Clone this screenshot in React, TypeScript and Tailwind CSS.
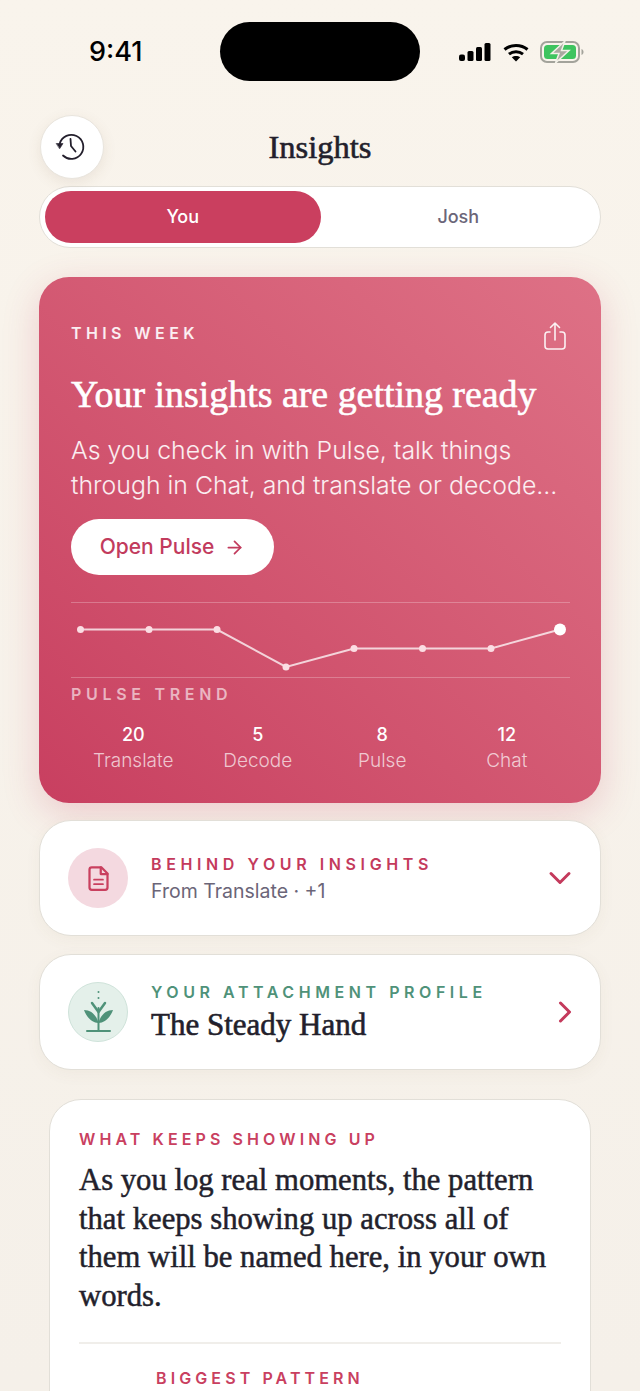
import React from 'react';
import { ArrowRight, ChevronDown, ChevronRight } from 'lucide-react';

const points = [
    [9.5, 27.5], [78, 27.5], [146, 27.5], [215, 65], [283, 46.5], [351.5, 46.5], [420, 46.5], [489, 27.5],
];

const stats = [
    { value: '20', label: 'Translate' },
    { value: '5', label: 'Decode' },
    { value: '8', label: 'Pulse' },
    { value: '12', label: 'Chat' },
];

const serif = "font-['Liberation_Serif',serif] [-webkit-text-stroke:0.6px_currentColor]";
const serifBody = "font-['Liberation_Serif',serif] [-webkit-text-stroke:0.5px_currentColor]";

const StatusIcons = () => (
    <div className="flex items-center">
        <svg width="32" height="18" viewBox="0 0 32 18" fill="#000">
            <rect x="0" y="11.500" width="6" height="6.500" rx="2" />
            <rect x="8.500" y="8" width="6" height="10" rx="1.500" />
            <rect x="17" y="4" width="6" height="14" rx="1.500" />
            <rect x="25.500" y="0" width="6" height="18" rx="1.500" />
        </svg>
        <svg width="26" height="19" viewBox="0 0 26 19" fill="none" stroke="#000" strokeWidth="3" className="ml-[12px]">
            <path d="M1.500 6.500C8 1 18 1 24.500 6.500" />
            <path d="M6 11.200C10 8 16 8 20 11.200" />
            <path d="M13 18.500L8.800 14.200C11 12.600 15 12.600 17.200 14.200Z" fill="#000" stroke="none" />
        </svg>
        <svg width="44" height="24" viewBox="0 0 44 24" className="ml-[11px]">
            <rect x="1" y="2" width="38" height="20" rx="6" fill="none" stroke="#a3a39b" strokeWidth="2" />
            <rect x="4" y="5" width="32" height="14" rx="3.500" fill="#3ec45f" />
            <path d="M41.500 9v6c1.400-.5 2-1.600 2-3s-.6-2.500-2-3z" fill="#a3a39b" />
            <path d="M25 1L11.500 13.500H19L15.500 23L29 10.500H21.500z" fill="#a9a9a0" stroke="#f3f1e8" strokeWidth="1.500" />
        </svg>
    </div>
);

const App = () => {
    return (
        <div className="w-[640px] h-[1391px] overflow-hidden bg-gradient-to-b from-[#f9f4ec] to-[#f5f0e9] font-['Inter',sans-serif] text-[#231f2c]">
            <div className="relative flex justify-center pt-[22px] h-[115px]">
                <div className="w-[200px] h-[59px] bg-black rounded-[30px]" />
                <div className="absolute left-[89px] top-[34px] text-[27px] leading-[36px] font-medium text-black">9:41</div>
                <div className="absolute right-[56px] top-[40px]"><StatusIcons /></div>
            </div>

            <div className="px-[39px]">
                <div className="flex items-center">
                    <button className="ml-px w-[64px] h-[64px] rounded-full bg-white shadow-[0_4px_14px_rgba(120,90,60,0.1)] border border-[#e9e5de]">
                        <svg width="62" height="62" viewBox="1 1 62 62" fill="none" stroke="#231f2c" strokeWidth="1.800" strokeLinecap="round" strokeLinejoin="round">
                            <path d="M19.800 28.500A12 12 0 1 1 23 40.500" />
                            <path d="M30.500 24L31 31L35.500 36.500" />
                            <path d="M16.500 28.500h6.500l-3.200 5z" fill="#231f2c" strokeWidth="0.600" />
                        </svg>
                    </button>
                    <h1 className={`flex-1 text-center text-[32.500px] -ml-px pt-px ${serif}`}>Insights</h1>
                    <div className="w-[64px]" />
                </div>

                <div className="mt-[7px] h-[62px] rounded-full bg-white border border-[#e2dfd8] p-[4px] pl-[5px] flex">
                    <div className="flex-1 rounded-full bg-[#ca3f5f] text-white text-[18px] font-medium flex items-center justify-center pb-px">You</div>
                    <div className="flex-1 rounded-full text-[#6b6578] text-[18px] font-medium flex items-center justify-center pb-px">Josh</div>
                </div>

                <section className="mt-[29px] h-[526px] rounded-[30px] px-[32px] pt-[46px] bg-gradient-to-tr from-[#c83f60] to-[#de7186] shadow-[0_10px_36px_rgba(200,64,96,0.22)] text-white">
                    <div className="flex justify-between items-start">
                        <div className="text-[16px] leading-[20px] font-semibold tracking-[4.4px] text-white/90">THIS WEEK</div>
                        <svg width="24" height="30" viewBox="0 0 24 30" fill="none" stroke="#fff" strokeOpacity="0.9" strokeWidth="1.600" strokeLinecap="round" strokeLinejoin="round" className="mr-[2px] -mt-[2px]">
                            <path d="M7 11H5a3 3 0 0 0-3 3v11a3 3 0 0 0 3 3h14a3 3 0 0 0 3-3V14a3 3 0 0 0-3-3h-2" />
                            <path d="M12 19V2M7.500 6.500L12 2l4.500 4.500" />
                        </svg>
                    </div>
                    <h2 className={`mt-[21px] text-[37.900px] leading-[44px] whitespace-nowrap ${serif}`}>Your insights are getting ready</h2>
                    <p className="mt-[17px] text-[24.850px] leading-[35px] font-light text-white/90 whitespace-nowrap">
                        As you check in with Pulse, talk things<br />through in Chat, and translate or decode...
                    </p>
                    <button className="mt-[16px] w-[203px] h-[56px] rounded-full bg-white text-[#c23b5d] text-[21px] font-medium flex items-center justify-center gap-[10px]">
                        Open Pulse <ArrowRight size={21} strokeWidth={2} />
                    </button>

                    <svg width="499" height="76" viewBox="0 0 499 76" className="mt-[27px] block" fill="none">
                        <path d="M0 .5H499M0 75.500H499" stroke="#fff" strokeOpacity="0.25" />
                        <polyline points={points.map((p) => p.join(',')).join(' ')} stroke="#fff" strokeOpacity="0.75" strokeWidth="2" />
                        {points.slice(0, 7).map((p) => (
                            <circle key={p[0]} cx={p[0]} cy={p[1]} r="3.500" fill="#fbdde3" />
                        ))}
                        <circle cx="489" cy="27.500" r="6" fill="#fff" />
                    </svg>

                    <div className="mt-[6px] text-[16px] leading-[20px] font-semibold tracking-[4.7px] text-white/60">PULSE TREND</div>
                    <div className="mt-[18px] grid grid-cols-4">
                        {stats.map((s) => (
                            <div key={s.label} className="text-center">
                                <div className="text-[18px] leading-[26px] font-medium">{s.value}</div>
                                <div className="text-[19px] leading-[26px] font-light text-white/70">{s.label}</div>
                            </div>
                        ))}
                    </div>
                </section>

                <div className="mt-[17px] h-[116px] rounded-[32px] bg-white border border-[#e2dfd8] pl-[28px] pr-[22px] flex items-center shadow-[0_4px_16px_rgba(120,90,60,0.05)]">
                    <div className="w-[60px] h-[60px] rounded-full bg-[#f4d9e0] flex items-center justify-center">
                        <svg width="27" height="27" viewBox="0 0 24 24" fill="none" stroke="#c9405f" strokeWidth="2" strokeLinecap="round" strokeLinejoin="round">
                            <path d="M6 2h8.500L20 7.500V20a2 2 0 0 1-2 2H6a2 2 0 0 1-2-2V4a2 2 0 0 1 2-2z" />
                            <path d="M14 2v6h6" />
                            <path d="M8 13h8M8 17h8" strokeWidth="1.500" />
                        </svg>
                    </div>
                    <div className="ml-[23px] flex-1">
                        <div className="text-[16px] leading-[22px] font-semibold tracking-[4.6px] text-[#c43a5c]">BEHIND YOUR INSIGHTS</div>
                        <div className="mt-[4px] text-[19.500px] leading-[24px] text-[#6b6578]">From Translate · +1</div>
                    </div>
                    <ChevronDown size={36} strokeWidth={2} className="text-[#c43a5c]" />
                </div>

                <div className="mt-[18px] h-[116px] rounded-[32px] bg-white border border-[#e2dfd8] pl-[28px] pr-[17px] flex items-center shadow-[0_4px_16px_rgba(120,90,60,0.05)]">
                    <div className="w-[60px] h-[60px] rounded-full bg-[#e4f0ea] border border-[#cfe3da] flex items-center justify-center">
                        <svg width="33" height="44" viewBox="0 0 33 44" fill="none">
                            <circle cx="16.500" cy="2" r="1" fill="#4f9279" />
                            <circle cx="16.500" cy="8" r="1" fill="#4f9279" />
                            <path d="M16.500 18V41M5 41H28" stroke="#4f9279" strokeWidth="2" strokeLinecap="round" />
                            <path d="M10 13l6.500 9 6.500-9" stroke="#4f9279" strokeWidth="2.500" strokeLinecap="round" strokeLinejoin="round" />
                            <path d="M16.500 33C10 33 4.500 27 2 20c7 0 12.500 5 14.500 13zM16.500 33c6.500 0 12-6 14.500-13-7 0-12.500 5-14.500 13z" fill="#4f9279" />
                        </svg>
                    </div>
                    <div className="ml-[23px] flex-1 pt-[2px]">
                        <div className="text-[16px] leading-[20px] font-semibold tracking-[4.560px] text-[#4f9279]">YOUR ATTACHMENT PROFILE</div>
                        <div className={`mt-[4px] text-[31px] leading-[38px] ${serif}`}>The Steady Hand</div>
                    </div>
                    <ChevronRight size={36} strokeWidth={2} className="text-[#c43a5c]" />
                </div>

                <div className="mt-[29px] mx-[10px] h-[400px] rounded-t-[32px] bg-white border border-[#e2dfd8] px-[29px] pt-[29px]">
                    <div className="text-[16px] leading-[20px] font-semibold tracking-[4.100px] text-[#c9405f]">WHAT KEEPS SHOWING UP</div>
                    <p className={`mt-[12px] text-[30.700px] leading-[38.500px] ${serifBody}`}>
                        As you log real moments, the pattern that keeps showing up across all of them will be named here, in your own words.
                    </p>
                    <div className="mt-[27px] h-[2px] bg-[#f0eeea]" />
                    <div className="mt-[24px] ml-[77px] text-[16px] leading-[20px] font-semibold tracking-[4.100px] text-[#c9405f]">BIGGEST PATTERN</div>
                </div>
            </div>
        </div>
    );
};

export default App;
